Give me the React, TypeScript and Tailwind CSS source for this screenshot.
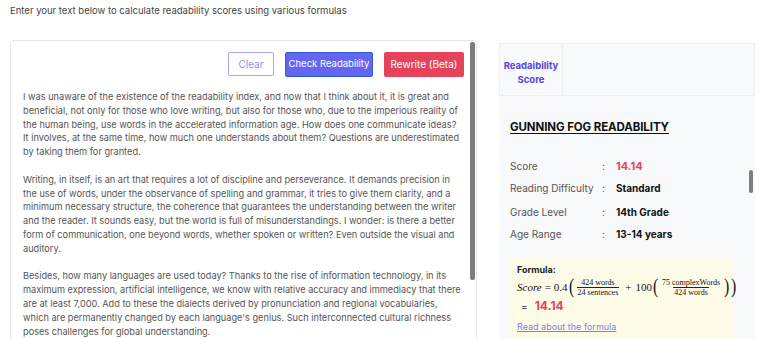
import React from "react";

const p1 =
  "I was unaware of the existence of the readability index, and now that I think about it, it is great and beneficial, not only for those who love writing, but also for those who, due to the imperious reality of the human being, use words in the accelerated information age. How does one communicate ideas? It involves, at the same time, how much one understands about them? Questions are underestimated by taking them for granted.";
const p2 =
  "Writing, in itself, is an art that requires a lot of discipline and perseverance. It demands precision in the use of words, under the observance of spelling and grammar, it tries to give them clarity, and a minimum necessary structure, the coherence that guarantees the understanding between the writer and the reader. It sounds easy, but the world is full of misunderstandings. I wonder: is there a better form of communication, one beyond words, whether spoken or written? Even outside the visual and auditory.";
const p3 =
  "Besides, how many languages are used today? Thanks to the rise of information technology, in its maximum expression, artificial intelligence, we know with relative accuracy and immediacy that there are at least 7,000. Add to these the dialects derived by pronunciation and regional vocabularies, which are permanently changed by each language's genius. Such interconnected cultural richness poses challenges for global understanding.";

function Frac({ num, den }: { num: string; den: string }) {
  return (
    <span className="inline-flex flex-col items-center shrink-0 whitespace-nowrap mx-[2px] text-[8px] leading-[9px]">
      <span className="px-[1px]">{num}</span>
      <span className="px-[1px] border-t border-[#222]">{den}</span>
    </span>
  );
}

function Paren({ c }: { c: string }) {
  return <span className="text-[21px] leading-none inline-block shrink-0 scale-x-75 -mt-[2px]">{c}</span>;
}

function Row({ label, value, red }: { label: string; value: string; red?: boolean }) {
  return (
    <div className="flex items-center h-[22px]">
      <span className="w-[92px] text-[10px] text-[#555]">{label}</span>
      <span className="w-[14px] text-[10px] text-[#555]">:</span>
      <span className={red ? "text-[11px] font-bold text-[#e8435a]" : "text-[10px] font-bold text-[#111]"}>{value}</span>
    </div>
  );
}

export default function App() {
  return (
    <div
      className="w-[768px] h-[339px] overflow-hidden bg-white"
      style={{ fontFamily: "Inter, 'Noto Sans', sans-serif" }}
    >
      <div className="pl-[10px] pt-[4px] h-[40px] text-[9.5px] leading-[13px] text-[#444]">
        Enter your text below to calculate readability scores using various formulas
      </div>
      <div className="flex items-start">
        <div className="ml-[10px] w-[467px] h-[320px] border border-[#e6e6e6] rounded-[4px] flex">
          <div className="flex-1 pl-[12px] pr-[6px]">
            <div className="flex justify-end gap-[11px] mt-[11px]">
              <button className="w-[46px] h-[24px] border border-[#a5a8f5] rounded-[2px] text-[10px] text-[#8b8ef0] bg-white">
                Clear
              </button>
              <button className="w-[88px] h-[25px] border border-[#2f5bd8] rounded-[2px] text-[9.5px] text-white bg-[#6466ee]">
                Check Readability
              </button>
              <button className="w-[80px] h-[25px] rounded-[2px] text-[10px] text-white bg-[#e6435b]">
                Rewrite (Beta)
              </button>
            </div>
            <div className="mt-[13px] text-[9.2px] leading-[13.8px] text-[#555] pr-[1px]">
              <p>{p1}</p>
              <p className="mt-[13.8px]">{p2}</p>
              <p className="mt-[13.8px]">{p3}</p>
            </div>
          </div>
          <div className="w-[5px] h-[238px] mt-[1px] mr-[1px] rounded-[2px] bg-[#7d7d7d]" />
        </div>
        <div className="ml-[22px] mt-[3px] w-[256px] h-[300px] bg-[#f8f9fb] relative">
          <div className="flex h-[53px] border border-[#eceef2]">
            <div className="w-[63px] pt-[6px] border-r border-[#eceef2] flex items-center justify-center text-center text-[9.5px] leading-[14px] font-bold text-[#5346e0]">
              Readaibility
              <br />
              Score
            </div>
            <div className="flex-1" />
          </div>
          <div className="pl-[11px] pt-[23px]">
            <div className="text-[11.5px] font-bold text-[#111] underline underline-offset-[2px] tracking-[-0.1px]">
              GUNNING FOG READABILITY
            </div>
            <div className="mt-[19px]">
              <Row label="Score" value="14.14" red />
              <Row label="Reading Difficulty" value="Standard" />
              <div className="h-[2px]" />
              <Row label="Grade Level" value="14th Grade" />
              <Row label="Age Range" value="13-14 years" />
            </div>
            <div className="mt-[12px] w-[224px] h-[100px] bg-[#fefce9] rounded-[4px] px-[7px] pt-[7px]">
              <div className="text-[9px] leading-[12px] font-bold text-[#222]">Formula:</div>
              <div
                className="flex items-center whitespace-nowrap text-[11px] text-[#111] h-[22px]"
                style={{ fontFamily: "'Liberation Serif', 'DejaVu Serif', serif" }}
              >
                <span className="italic">Score</span>
                <span className="mx-[3px]">=</span>
                <span>0.4</span>
                <Paren c="(" />
                <Frac num="424 words" den="24 sentences" />
                <span className="mx-[4px]">+</span>
                <span>100</span>
                <Paren c="(" />
                <Frac num="75 complexWords" den="424 words" />
                <Paren c=")" />
                <Paren c=")" />
              </div>
              <div className="flex items-center pl-[4px] h-[16px]">
                <span className="text-[10px] text-[#222]">=</span>
                <span className="ml-[7px] text-[12px] font-bold text-[#e8435a]">14.14</span>
              </div>
              <div className="mt-[6px] text-[9px] text-[#7f7ff0] underline">Read about the formula</div>
            </div>
          </div>
          <div className="absolute right-[2px] top-[127px] w-[4px] h-[23px] rounded-[2px] bg-[#7d7d7d]" />
        </div>
      </div>
    </div>
  );
}
